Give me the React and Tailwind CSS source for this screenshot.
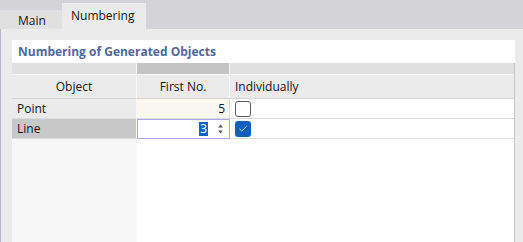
import { Check } from "lucide-react";

const font = { fontFamily: '"Open Sans", "Noto Sans", sans-serif' };

function Checkbox({ checked }) {
  if (checked) {
    return (
      <div className="w-[16px] h-[16px] rounded-[3px] bg-[#0f5fbf] flex items-center justify-center">
        <Check className="w-[10px] h-[10px] text-white" strokeWidth={1.8} />
      </div>
    );
  }
  return <div className="w-[16px] h-[16px] rounded-[3px] border border-[#5a5a5a] bg-white" />;
}

function Spinner() {
  return (
    <svg width="7" height="12" viewBox="0 0 7 12" className="ml-[9px] mr-[3px]">
      <path d="M3.5 1.5 L6 4.5 H1 Z" fill="#5a5a5a" />
      <path d="M3.5 10.5 L6 7.5 H1 Z" fill="#5a5a5a" />
    </svg>
  );
}

export default function App() {
  return (
    <div
      className="w-[523px] h-[242px] bg-[#d4d4d8] flex flex-col overflow-hidden text-[12px] text-[#161616]"
      style={font}
    >
      {/* Tabs */}
      <div className="h-[29px] flex items-end">
        <div className="w-[62px] h-[19px] bg-[#e0e0e0] flex items-center pl-[18px] pt-[2px]">Main</div>
        <div className="w-[84px] h-[26px] bg-[#ebebeb] flex items-center pl-[9px] pb-[1px]">Numbering</div>
      </div>

      {/* Panel */}
      <div className="flex-1 bg-[#ebebeb] border-l border-[#b8b8c4] pl-[11px] pt-[11px] pr-[8px] flex flex-col">
        <div className="flex-1 bg-white flex flex-col">
          <div className="h-[23px] flex items-center pl-[6px] font-bold text-[#53679a]">
            Numbering of Generated Objects
          </div>

          <div className="flex-1 grid grid-cols-[125px_93px_1fr] grid-rows-[12px_24px_20px_20px_1fr] border-r border-[#c8c8c8]">
            {/* top band */}
            <div className="bg-[#e0e0e0] border-r border-b border-[#f8f8f8]" />
            <div className="bg-[#c4c4c4] border-r border-b border-[#f8f8f8]" />
            <div className="bg-[#e0e0e0] border-b border-[#f8f8f8]" />

            {/* headers */}
            <div className="bg-[#ebebeb] border-r border-b border-[#d4d4d4] border-r-[#f8f8f8] flex items-center justify-center">Object</div>
            <div className="bg-[#ebebeb] border-r border-b border-[#d4d4d4] border-r-[#f8f8f8] flex items-center justify-center">First No.</div>
            <div className="bg-[#ebebeb] border-b border-[#d4d4d4] flex items-center pl-[5px]">Individually</div>

            {/* Point */}
            <div className="bg-[#ebebeb] border-r border-b border-[#dcdcdc] border-r-[#f8f8f8] flex items-center pl-[5px]">Point</div>
            <div className="bg-[#f8f8f0] border-r border-b border-[#dcdcdc] flex items-center justify-end pr-[4px]">5</div>
            <div className="bg-white border-b border-[#dcdcdc] flex items-center pl-[5px]">
              <Checkbox checked={false} />
            </div>

            {/* Line */}
            <div className="bg-[#c8c8c8] border-r border-b border-[#dcdcdc] border-r-[#f8f8f8] flex items-center pl-[5px]">Line</div>
            <div className="bg-white border border-[#a9a9e8] flex items-center justify-end pr-[2px]">
              <span className="bg-[#0a64c8] text-white leading-[14px] px-[1px]">3</span>
              <Spinner />
            </div>
            <div className="bg-white border-b border-[#dcdcdc] flex items-center pl-[5px]">
              <Checkbox checked />
            </div>

            {/* filler */}
            <div className="bg-[#f7f7f7]" />
            <div className="bg-white" />
            <div className="bg-white" />
          </div>
        </div>
      </div>
    </div>
  );
}
